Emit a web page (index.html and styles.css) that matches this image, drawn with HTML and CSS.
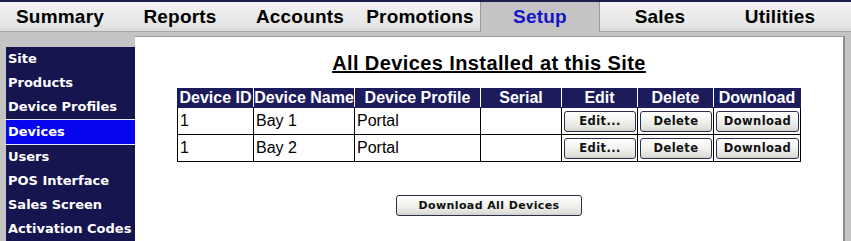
FILE: index.html
```html
<!DOCTYPE html>
<html lang="en">
<head>
  <title>Setup - Devices</title>
  <meta charset="utf-8">
  <link rel="stylesheet" href="styles.css">
</head>
<body>
  <div class="topline"></div>
  <div class="tabs">
    <div class="tab">Summary</div>
    <div class="tab">Reports</div>
    <div class="tab">Accounts</div>
    <div class="tab">Promotions</div>
    <div class="tab active">Setup</div>
    <div class="tab">Sales</div>
    <div class="tab">Utilities</div>
  </div>
  <div class="main">
    <div class="sidebar">
      <div class="side-item">Site</div>
      <div class="side-item">Products</div>
      <div class="side-item">Device Profiles</div>
      <div class="side-item selected">Devices</div>
      <div class="side-item">Users</div>
      <div class="side-item">POS Interface</div>
      <div class="side-item">Sales Screen</div>
      <div class="side-item">Activation Codes</div>
    </div>
    <div class="content">
      <h1 class="title">All Devices Installed at this Site</h1>
      <table class="devices">
        <tr>
          <th class="c-id">Device ID</th>
          <th class="c-name">Device Name</th>
          <th class="c-profile">Device Profile</th>
          <th class="c-serial">Serial</th>
          <th class="c-edit">Edit</th>
          <th class="c-delete">Delete</th>
          <th class="c-download">Download</th>
        </tr>
        <tr>
          <td>1</td>
          <td>Bay 1</td>
          <td>Portal</td>
          <td>&nbsp;</td>
          <td class="btn-cell"><button type="button" class="btn">Edit...</button></td>
          <td class="btn-cell"><button type="button" class="btn">Delete</button></td>
          <td class="btn-cell"><button type="button" class="btn">Download</button></td>
        </tr>
        <tr>
          <td>1</td>
          <td>Bay 2</td>
          <td>Portal</td>
          <td>&nbsp;</td>
          <td class="btn-cell"><button type="button" class="btn">Edit...</button></td>
          <td class="btn-cell"><button type="button" class="btn">Delete</button></td>
          <td class="btn-cell"><button type="button" class="btn">Download</button></td>
        </tr>
      </table>
      <div class="actions">
        <button type="button" class="btn btn-all">Download All Devices</button>
      </div>
    </div>
  </div>
</body>
</html>
```

FILE: styles.css
```css
html, body
{
  margin: 0;
  padding: 0;
  height: 100%;
  overflow: hidden;
}
body
{
  background: #c4c4c4;
  font-family: "Liberation Sans", Arial, sans-serif;
}
.topline
{
  height: 2px;
  background: #1c1c4e;
}
.tabs
{
  display: grid;
  grid-template-columns: repeat(7, 120px);
  height: 29px;
  background: linear-gradient(#f2f2f2, #e8e8e8 70%, #dadada);
  border-bottom: 1px solid #a8a8a8;
}
.tab
{
  display: flex;
  align-items: center;
  justify-content: center;
  font-size: 19px;
  font-weight: bold;
  letter-spacing: 0.2px;
  color: #000;
}
.tab.active
{
  background: #c4c4c4;
  color: #1414c8;
  border-left: 1px solid #9a9a9a;
  border-right: 1px solid #9a9a9a;
  margin-bottom: -1px;
}
.main
{
  display: flex;
  padding-left: 6px;
  height: 210px;
}
.sidebar
{
  width: 129px;
  margin-top: 15px;
  background: #16154f;
}
.side-item
{
  height: 24px;
  line-height: 24px;
  padding-left: 2px;
  color: #fff;
  font-family: "DejaVu Sans", Verdana, sans-serif;
  font-size: 13px;
  font-weight: bold;
  white-space: nowrap;
}
.side-item.selected
{
  background: #0505ee;
  border-top: 1px solid #e8e8ff;
  border-bottom: 1px solid #e8e8ff;
}
.content
{
  flex: 1;
  margin-top: 4px;
  margin-right: 6px;
  background: #fff;
  border-top: 1px solid #9a9a9a;
  border-right: 2px solid #8c8c8c;
}
.title
{
  margin: 15px 0 0;
  text-align: center;
  font-size: 20px;
  letter-spacing: 0.4px;
  text-decoration: underline;
  line-height: 22px;
}
.devices
{
  margin: 14px auto 0;
  border-collapse: collapse;
  width: 623px;
  table-layout: fixed;
}
.devices th
{
  height: 18px;
  padding: 0;
  background: #1c1b5b;
  color: #fff;
  font-size: 16px;
  line-height: 18px;
  border: 1px solid #fff;
  border-top-color: #1c1b5b;
  border-bottom-color: #1c1b5b;
  white-space: nowrap;
}
.devices th:first-child
{
  border-left-color: #1c1b5b;
}
.devices th:last-child
{
  border-right-color: #1c1b5b;
}
.c-id { width: 75px; }
.c-name { width: 100px; }
.c-profile { width: 125px; }
.c-serial { width: 80px; }
.c-edit { width: 75px; }
.c-delete { width: 75px; }
.c-download { width: 86px; }
.devices td
{
  height: 24px;
  padding: 0 0 0 2px;
  border: 1px solid #000;
  font-size: 16px;
  color: #000;
}
.devices td.btn-cell
{
  padding: 1px 1px 1px 2px;
}
.btn
{
  display: block;
  width: 100%;
  height: 21px;
  padding: 0;
  background: linear-gradient(#ffffff, #f2f2f0 45%, #e2e2dc 85%, #d2d2cc);
  border: 1px solid #2b3050;
  border-radius: 3px;
  font-family: "DejaVu Sans", Verdana, sans-serif;
  font-size: 11.5px;
  font-weight: bold;
  letter-spacing: 0.4px;
  color: #111;
  cursor: pointer;
}
.actions
{
  display: flex;
  justify-content: center;
  margin-top: 33px;
}
.btn-all
{
  width: 186px;
  height: 21px;
  font-size: 11px;
}
```
